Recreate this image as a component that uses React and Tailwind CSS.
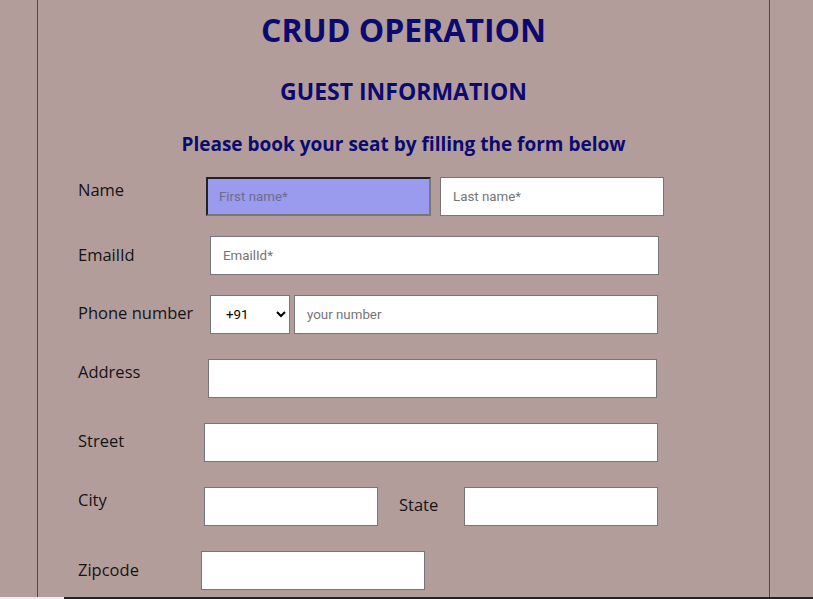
import React from "react";

const inputCls =
  "h-[38px] bg-white border border-[#767676] px-3 text-[13.33px] text-black placeholder:text-[#757575] outline-none";
const labelCls = "text-[16.5px] leading-6 text-[#141414] shrink-0";
const roboto = { fontFamily: "Roboto, 'Liberation Sans', sans-serif" };

export default function App() {
  return (
    <div
      className="h-[599px] w-full overflow-hidden flex flex-col bg-[#b39d9b]"
      style={{ fontFamily: "'Open Sans', 'Liberation Sans', sans-serif" }}
    >
      <div className="flex-1 min-h-0 flex">
        <div className="ml-[37px] w-[733px] border-x border-[#2b4f9e] flex flex-col">
          {/* Headings */}
          <h1 className="mt-[8px] text-center text-[32px] leading-[44px] font-bold text-[#0a0a70]">
            CRUD OPERATION
          </h1>
          <h2 className="mt-[23px] text-center text-[23px] leading-8 font-bold text-[#0a0a70]">
            GUEST INFORMATION
          </h2>
          <p className="mt-[23px] text-center text-[19px] leading-7 font-bold text-[#0a0a70]">
            Please book your seat by filling the form below
          </p>

          {/* Form */}
          <form className="mt-[19px] pl-[40px] flex flex-col">
            <div className="flex items-start h-[39px]">
              <label className={`${labelCls} w-[128px] mt-[1px]`}>Name</label>
              <input
                className="h-[39px] w-[225px] bg-[#9a9aee] border-2 border-t-[#222] border-l-[#222] border-b-[#777] border-r-[#777] px-[11px] text-[13.33px] placeholder:text-[#6d6d8a] outline-none"
                style={roboto}
                placeholder="First name*"
              />
              <input
                className={`${inputCls} h-[39px] ml-[9px] w-[224px]`}
                style={roboto}
                placeholder="Last name*"
              />
            </div>

            <div className="flex items-start h-[39px] mt-[20px]">
              <label className={`${labelCls} w-[132px] mt-[7px]`}>EmailId</label>
              <input className={`${inputCls} h-[39px] w-[449px]`} style={roboto} placeholder="EmailId*" />
            </div>

            <div className="flex items-start h-[39px] mt-[20px]">
              <label className={`${labelCls} w-[132px] mt-[6px]`}>Phone number</label>
              <select
                className="h-[39px] w-[80px] bg-white border border-[#767676] pl-[11px] text-[13.33px] text-black outline-none"
                style={roboto}
                defaultValue="+91"
              >
                <option>+91</option>
                <option>+1</option>
                <option>+44</option>
              </select>
              <input
                className={`${inputCls} h-[39px] ml-[4px] w-[364px]`}
                style={roboto}
                placeholder="your number"
              />
            </div>

            <div className="flex items-start h-[39px] mt-[25px]">
              <label className={`${labelCls} w-[130px] mt-[1px]`}>Address</label>
              <input className={`${inputCls} h-[39px] w-[449px]`} />
            </div>

            <div className="flex items-start h-[39px] mt-[25px]">
              <label className={`${labelCls} w-[126px] mt-[6px]`}>Street</label>
              <input className={`${inputCls} h-[39px] w-[454px]`} />
            </div>

            <div className="flex items-start h-[39px] mt-[25px]">
              <label className={`${labelCls} w-[126px] mt-[1px]`}>City</label>
              <input className={`${inputCls} h-[39px] w-[174px]`} />
              <label className={`${labelCls} ml-[21px] w-[65px] mt-[6px]`}>State</label>
              <input className={`${inputCls} h-[39px] w-[194px]`} />
            </div>

            <div className="flex items-start h-[39px] mt-[25px]">
              <label className={`${labelCls} w-[123px] mt-[7px]`}>Zipcode</label>
              <input className={`${inputCls} h-[39px] w-[224px]`} />
            </div>
          </form>
        </div>
      </div>

      {/* bottom strip */}
      <div className="h-[2px] flex shrink-0">
        <div className="w-[64px] bg-[#eeeeee]" />
        <div className="flex-1 bg-[#182828]" />
      </div>
    </div>
  );
}
